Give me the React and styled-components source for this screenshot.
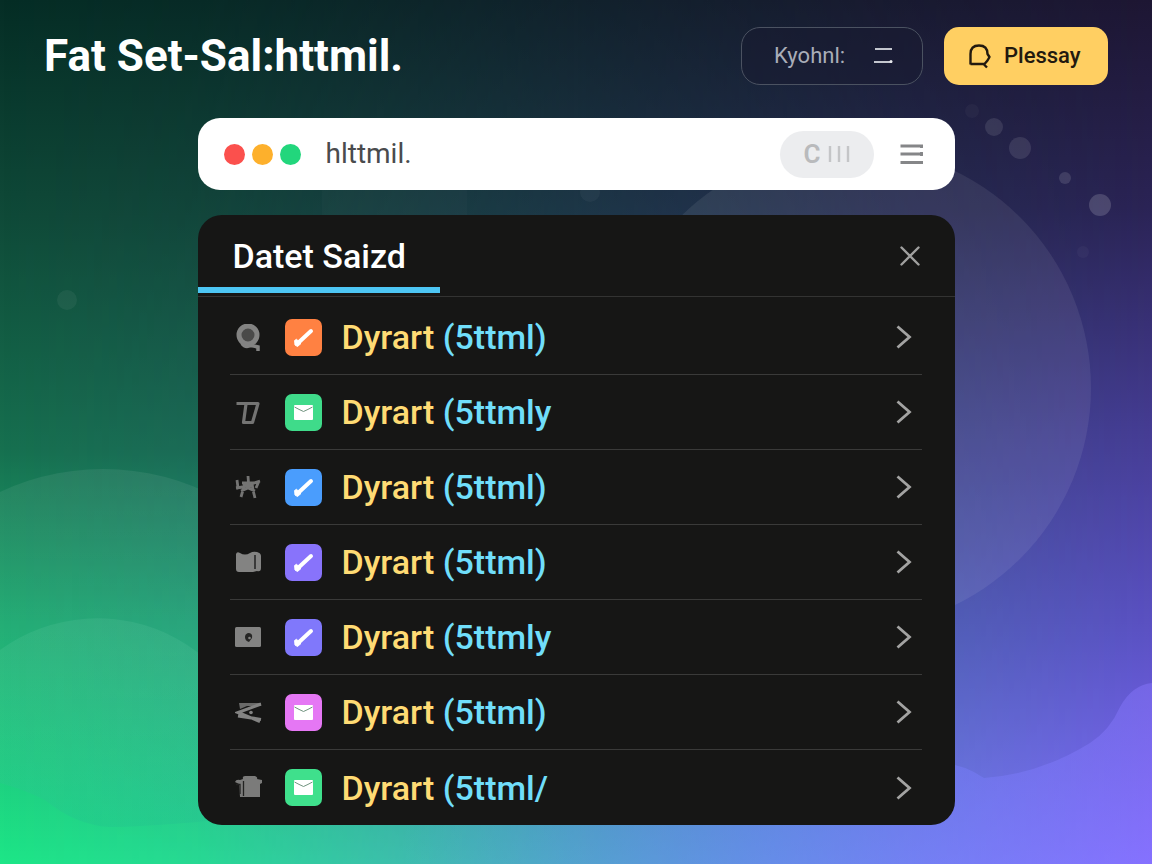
import React from "react";
import styled, { createGlobalStyle } from "styled-components";

const GlobalStyle = createGlobalStyle`
  *, *::before, *::after { box-sizing: border-box; }
  body {
    margin: 0;
    font-family: Roboto, "Liberation Sans", sans-serif;
    background: #0f4a3a;
  }
  h1, h2, ul { margin: 0; padding: 0; }
  button { font-family: inherit; cursor: pointer; }
`;

const Page = styled.div`
  position: relative;
  isolation: isolate;
  overflow: hidden;
  min-height: 100vh;
  padding-bottom: 39px;
  background: linear-gradient(180deg, #052d25 0%, #0f4a38 25%, #16704f 52%, #1caa70 72%, #1de687 100%);

  &::before {
    content: "";
    position: absolute;
    inset: 0;
    z-index: -2;
    background: linear-gradient(180deg, #1d1633 0%, #2a2355 24%, #453c94 50%, #5c52c6 74%, #826bff 100%);
    mask-image: linear-gradient(90deg, transparent 0%, rgba(0, 0, 0, 0.1) 17%, rgba(0, 0, 0, 0.5) 50%, rgba(0, 0, 0, 0.84) 80%, #000 100%);
  }
`;

const Scenery = styled.svg`
  position: absolute;
  inset: 0;
  z-index: -1;
  width: 100%;
  height: 100%;
`;

const Header = styled.header`
  display: flex;
  align-items: center;
  justify-content: space-between;
  gap: 24px;
  padding: 27px 44px 0;
`;

const Title = styled.h1`
  font-size: 44px;
  line-height: 58px;
  font-weight: 700;
  color: #fff;
`;

const Actions = styled.div`
  display: flex;
  gap: 21px;
`;

const ActionButton = styled.button`
  display: flex;
  align-items: center;
  justify-content: ${(p) => (p.$filled ? "flex-start" : "space-between")};
  gap: 12px;
  width: ${(p) => (p.$filled ? 164 : 182)}px;
  height: 58px;
  padding: 0 ${(p) => (p.$filled ? 24 : 29)}px 0 ${(p) => (p.$filled ? 24 : 32)}px;
  border: ${(p) => (p.$filled ? "0" : "1px solid #4b5261")};
  border-radius: ${(p) => (p.$filled ? 15 : 19)}px;
  background: ${(p) => (p.$filled ? "#ffcf62" : "rgba(24, 26, 48, 0.5)")};
  color: ${(p) => (p.$filled ? "#22190f" : "#a9adb8")};
  font-size: 22px;
  line-height: 28px;
  font-weight: ${(p) => (p.$filled ? 500 : 400)};
`;

const Main = styled.main`
  display: flex;
  flex-direction: column;
  gap: 25px;
  width: calc(100% - 88px);
  max-width: 757px;
  margin: 33px auto 0;
`;

const AddressBar = styled.div`
  display: flex;
  align-items: center;
  height: 72px;
  padding: 0 29px 0 26px;
  border-radius: 22px;
  background: #fff;
`;

const Lights = styled.div`
  display: flex;
  gap: 7px;
`;

const Light = styled.span`
  width: 21px;
  height: 21px;
  border-radius: 50%;
  background: ${(p) => p.$color};
`;

const Address = styled.input`
  flex: 1;
  min-width: 0;
  margin: 0 25px;
  padding: 0;
  border: 0;
  outline: 0;
  background: transparent;
  color: #4a4b4d;
  font: 400 28px/36px Roboto, "Liberation Sans", sans-serif;
`;

const Chip = styled.button`
  display: flex;
  align-items: center;
  justify-content: center;
  gap: 7px;
  width: 94px;
  height: 47px;
  margin-right: 24px;
  padding: 0;
  border: 0;
  border-radius: 24px;
  background: #ecedef;
  color: #b9babc;
  font-size: 26px;
  line-height: 32px;
  font-weight: 600;
`;

const IconButton = styled.button`
  display: flex;
  align-items: center;
  justify-content: center;
  width: 28px;
  height: 28px;
  padding: 0;
  border: 0;
  background: transparent;
  color: ${(p) => p.$color};
`;

const Panel = styled.section`
  border-radius: 24px;
  overflow: hidden;
  background: #161615;
`;

const PanelHeader = styled.div`
  display: flex;
  align-items: center;
  justify-content: space-between;
  height: 82px;
  padding-right: 31px;
  border-bottom: 1px solid #333332;
`;

const Tab = styled.h2`
  align-self: flex-start;
  width: 242px;
  padding: 20px 0 10px 35px;
  border-bottom: 6px solid #4dc6f4;
  color: #fff;
  font-size: 34px;
  line-height: 42px;
  font-weight: 500;
  white-space: nowrap;
`;

const List = styled.ul`
  list-style: none;
  padding: 3px 33px 0 32px;
`;

const Item = styled.li`
  &:not(:last-child) { border-bottom: 1px solid #3a3a39; }
  height: 75px;
`;

const Row = styled.button`
  display: flex;
  align-items: center;
  width: 100%;
  height: 100%;
  padding: 0 8px 0 5px;
  border: 0;
  background: transparent;
  text-align: left;
`;

const Tile = styled.span`
  display: flex;
  align-items: center;
  justify-content: center;
  width: 37px;
  height: 37px;
  margin: 0 20px 0 24px;
  border-radius: 7px;
  background: ${(p) => p.$color};
`;

const Label = styled.span`
  flex: 1;
  font-size: 34px;
  line-height: 42px;
  font-weight: 500;
  color: #ffdb74;
`;

const Detail = styled.span`
  color: #70defa;
`;

const Pen = () => (
  <svg width="25" height="25" viewBox="0 0 25 25" aria-hidden="true">
    <path d="M6.500 18.500 20 6" stroke="#fff" strokeWidth="4" strokeLinecap="round" />
    <path d="M3.600 15.500 5.500 14.300 10 18.500 6.500 21.500 4 20Z" fill="#fff" stroke="#fff" strokeLinejoin="round" />
  </svg>
);

const Mail = () => (
  <svg width="21" height="17" viewBox="0 0 21 17" aria-hidden="true">
    <rect x="1" y="1" width="19" height="15" rx="1" fill="#fff" />
    <path d="M1.500 3Q6 5.500 10.500 7.500Q15 5.500 19.500 3" fill="none" stroke="#71947f" strokeWidth="1" />
  </svg>
);

const marks = {
  lens: (
    <>
      <circle cx="13" cy="11" r="9" fill="#4a4a49" stroke="#838382" strokeWidth="5" />
      <path d="M7 19.500Q10 24 16 21.500L23 23V27" fill="none" stroke="#838382" strokeWidth="3.500" />
    </>
  ),
  seven: (
    <path d="M1.500 4.500H23L17.500 23.500H8.500L11 5" fill="none" stroke="#747473" strokeWidth="3.200" strokeLinejoin="round" />
  ),
  star: (
    <path
      d="M2 6 3 14 10 12M1 14 8 13M13 2 13.500 9M7 9H19L25 7M10 9 8 16 6 23M17 9 18 16 20 24M6 17 13 14 20 17M24 7 21 14M10 12H18"
      fill="none"
      stroke="#747473"
      strokeWidth="2.800"
    />
  ),
  map: (
    <>
      <path d="M1 5Q2 2 5 4Q10 7 15 4Q18 2 22 3Q26 4 26 7V19Q26 23 22 22L18 23H4Q1 23 1 20Z" fill="#838382" />
      <path d="M20 6V20" stroke="#222" strokeWidth="1.500" />
    </>
  ),
  camera: (
    <>
      <rect x="0" y="3" width="26" height="20" rx="1.500" fill="#838382" />
      <path d="M13 9Q18 9 17 14L14 18Q10 17 10 13Q10 10 13 9Z" fill="#262625" />
      <circle cx="14.500" cy="14" r="1.300" fill="#838382" />
    </>
  ),
  plane: (
    <>
      <path d="M4 4H26V7H12L5 10Z" fill="#6a6a69" />
      <path d="M26 5 3 13.500 25 22.500M3 17 26 20.500" fill="none" stroke="#838382" strokeWidth="3.200" />
      <circle cx="16" cy="13.500" r="1.800" fill="#838382" />
    </>
  ),
  bin: (
    <>
      <path d="M0 8Q1 5 5 6L8 5Q7 2 10 2H20Q23 3 22 5L27 6V9L25 10V23H5L4 10Z" fill="#7b7b7a" />
      <path d="M8.500 7V22M1 10.500H5V20" fill="none" stroke="#222221" strokeWidth="1.300" />
    </>
  ),
};

const Mark = ({ name }) => (
  <svg width="27" height="27" viewBox="0 0 27 27" aria-hidden="true">
    {marks[name]}
  </svg>
);

const MarkSlot = styled.span`
  display: flex;
  width: 26px;
  svg { flex: none; }
`;

const rows = [
  { mark: "lens", color: "#ff8142", icon: Pen, detail: "(5ttml)" },
  { mark: "seven", color: "#3fdb8a", icon: Mail, detail: "(5ttmly" },
  { mark: "star", color: "#4a9dfd", icon: Pen, detail: "(5ttml)" },
  { mark: "map", color: "#8873fb", icon: Pen, detail: "(5ttml)" },
  { mark: "camera", color: "#8078fb", icon: Pen, detail: "(5ttmly" },
  { mark: "plane", color: "#e577f4", icon: Mail, detail: "(5ttml)" },
  { mark: "bin", color: "#3fe08c", icon: Mail, detail: "(5ttml/" },
];

const Background = () => (
  <Scenery viewBox="0 0 1152 864" preserveAspectRatio="none" aria-hidden="true">
    <defs>
      <linearGradient id="hill" x1="0" y1="0" x2="0" y2="1">
        <stop offset="0" stopColor="#fff" stopOpacity="0.07" />
        <stop offset="0.700" stopColor="#fff" stopOpacity="0.01" />
        <stop offset="1" stopColor="#fff" stopOpacity="0" />
      </linearGradient>
      <linearGradient id="mound" x1="0" y1="0" x2="0" y2="1">
        <stop offset="0" stopColor="#7fd8b4" stopOpacity="0.13" />
        <stop offset="1" stopColor="#22b890" stopOpacity="0.25" />
      </linearGradient>
      <linearGradient id="wave" x1="0" y1="0" x2="1" y2="0">
        <stop offset="0" stopColor="#5a8cff" stopOpacity="0" />
        <stop offset="0.500" stopColor="#6a86ff" stopOpacity="0.4" />
        <stop offset="1" stopColor="#8a78ff" stopOpacity="0.45" />
      </linearGradient>
    </defs>
    <g fill="#fff">
      <circle cx="850" cy="388" r="241" fillOpacity="0.075" />
      <path d="M322 180H467V240H322Z" fillOpacity="0.02" />
      <path d="M0 492A242 242 0 0 1 345 711V864H0Z" fill="url(#hill)" />
      <path d="M0 650A165 165 0 0 1 262 792V815Q170 826 110 827Q75 825 45 800Q25 790 0 783Z" fill="url(#mound)" />
      <path d="M400 762H940Q965 765 984 778Q1040 774 1090 743Q1110 730 1120 707Q1132 685 1152 683V864H400Z" fill="url(#wave)" />
      <circle cx="972" cy="111" r="7" fillOpacity="0.03" />
      <circle cx="994" cy="127" r="9" fillOpacity="0.1" />
      <circle cx="1020" cy="148" r="11" fillOpacity="0.1" />
      <circle cx="1065" cy="178" r="6" fillOpacity="0.12" />
      <circle cx="1100" cy="205" r="11" fillOpacity="0.16" />
      <circle cx="1083" cy="252" r="6" fillOpacity="0.03" />
      <circle cx="590" cy="192" r="10" fillOpacity="0.04" />
      <circle cx="67" cy="300" r="10" fillOpacity="0.05" />
    </g>
  </Scenery>
);

export default function App() {
  return (
    <Page>
      <GlobalStyle />
      <Background />
      <Header>
        <Title>Fat Set-Sal:httmil.</Title>
        <Actions>
          <ActionButton type="button">
            Kyohnl:
            <svg width="20" height="18" viewBox="0 0 20 18" aria-hidden="true">
              <path d="M2 2H19M1 15H19" stroke="#c3c6ce" strokeWidth="2" />
              <circle cx="18" cy="14.500" r="1.500" fill="#e6e7eb" />
            </svg>
          </ActionButton>
          <ActionButton type="button" $filled>
            <svg width="24" height="26" viewBox="0 0 24 26" fill="none" stroke="#22190f" strokeWidth="2.400" aria-hidden="true">
              <path d="M2.500 21.500V11Q2.500 2.500 11 2.500Q19.500 2.500 19.500 11L21.500 14 19.500 17.500 16.500 21H2.500M15.500 21 19 24.500" strokeLinejoin="round" />
            </svg>
            Plessay
          </ActionButton>
        </Actions>
      </Header>
      <Main>
        <AddressBar>
          <Lights>
            <Light $color="#fb504d" />
            <Light $color="#fdb02c" />
            <Light $color="#22d67c" />
          </Lights>
          <Address aria-label="Address" defaultValue="hlttmil." />
          <Chip type="button">
            C
            <svg width="22" height="18" viewBox="0 0 22 18" aria-hidden="true">
              <path d="M2 1V17M11 1V17M20 1V17" stroke="#c4c5c7" strokeWidth="2.400" />
            </svg>
          </Chip>
          <IconButton type="button" aria-label="Menu" $color="#858688">
            <svg width="24" height="20" viewBox="0 0 24 20" stroke="currentColor" strokeWidth="2.800" aria-hidden="true">
              <path d="M0.500 2H23M0.500 10H23M0.500 18.500H23" />
              <path d="M21.500 1V4M21.500 8V12" />
            </svg>
          </IconButton>
        </AddressBar>
        <Panel>
          <PanelHeader>
            <Tab>Datet Saizd</Tab>
            <IconButton type="button" aria-label="Close" $color="#a0a09f">
              <svg width="20" height="20" viewBox="0 0 20 20" stroke="currentColor" strokeWidth="2.400" strokeLinecap="round" aria-hidden="true">
                <path d="M1.500 1.500 18.500 18.500M18.500 1.500 1.500 18.500" />
              </svg>
            </IconButton>
          </PanelHeader>
          <List>
            {rows.map(({ mark, color, icon: Icon, detail }) => (
              <Item key={mark}>
                <Row type="button">
                  <MarkSlot>
                    <Mark name={mark} />
                  </MarkSlot>
                  <Tile $color={color}>
                    <Icon />
                  </Tile>
                  <Label>
                    Dyrart <Detail>{detail}</Detail>
                  </Label>
                  <svg width="20" height="26" viewBox="0 0 20 26" fill="none" stroke="#a3a3a2" strokeWidth="2.800" aria-hidden="true">
                    <path d="M3.500 2.500 15.500 13 3.500 23.500" />
                  </svg>
                </Row>
              </Item>
            ))}
          </List>
        </Panel>
      </Main>
    </Page>
  );
}
